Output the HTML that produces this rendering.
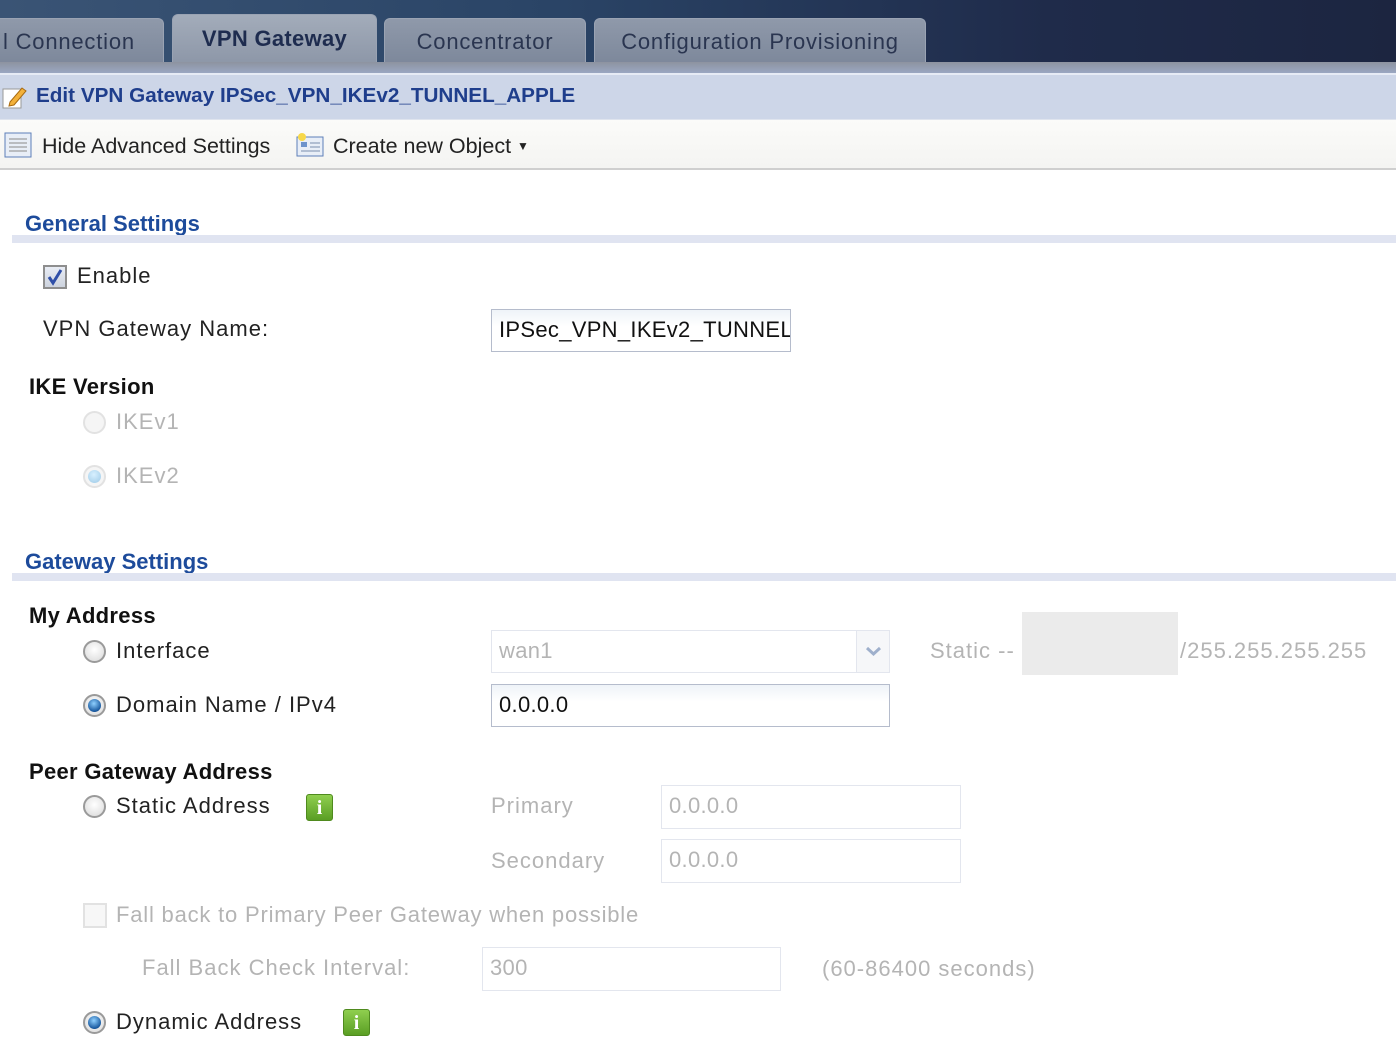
<!DOCTYPE html>
<html><head><meta charset="utf-8"><style>
*{margin:0;padding:0;box-sizing:border-box}
body{width:1396px;height:1054px;overflow:hidden;background:#fff;font-family:"Liberation Sans",sans-serif;position:relative;color:#222}
.a{position:absolute;white-space:nowrap}
.t{position:absolute;white-space:nowrap;font-size:22px;line-height:26px;height:26px;letter-spacing:1px}
.h{font-weight:bold;color:#1d4b9b;letter-spacing:0}
.b{font-weight:bold;color:#111;letter-spacing:0.3px}
.g{color:#b4b4b4}
.bar{position:absolute;left:12px;right:0;height:8px;background:#e0e4f1}
.tab{position:absolute;top:18px;height:45px;border-radius:6px 6px 0 0;background:linear-gradient(#8f99aa,#7d889b);border:1px solid #9aa3b3;border-bottom:none;color:#2a3550;font-size:22px;text-align:center;line-height:46px;letter-spacing:0.8px}
.radio{position:absolute;width:23px;height:23px;border-radius:50%;background:radial-gradient(circle at 50% 40%,#fff,#d8d8d8);border:2px solid #9a9a9a}
.radio.on::after{content:"";position:absolute;left:3px;top:3px;width:13px;height:13px;border-radius:50%;background:radial-gradient(circle at 45% 35%,#8fd0ff,#1a5aa0 70%,#0b2d5a)}
.radio.dis{border-color:#e2e2e2;background:#f5f5f5}
.radio.dis.on::after{background:radial-gradient(circle at 45% 35%,#d8f0ff,#9cc9e6)}
.inp{position:absolute;border:1px solid #b5bccc;background:linear-gradient(#eef3f8,#fff 40%);font-size:22px;line-height:40px;padding-left:7px;color:#111;letter-spacing:0.3px}
.inp.dis{border-color:#e3e6ee;background:#fff;color:#b4b4b4}
.info{position:absolute;width:27px;height:27px;border-radius:3px;background:linear-gradient(#8fcf4f,#5a9e24);border:1px solid #4f8a1e;color:#fff;font-weight:bold;font-family:"Liberation Serif",serif;font-size:20px;text-align:center;line-height:26px}
</style></head><body>
<div class="a" style="left:0;top:0;width:1396px;height:63px;background:linear-gradient(90deg,#3a5475 0%,#2a4466 40%,#1f2b4a 75%,#1c2540 100%)"></div>
<div class="tab" style="left:-10px;width:174px;text-align:left;padding-left:12px">l Connection</div>
<div class="tab" style="left:172px;top:14px;height:49px;width:205px;background:linear-gradient(#a3acba,#8d97a8);font-weight:bold;color:#1e2c4f;line-height:48px;letter-spacing:0.3px">VPN Gateway</div>
<div class="tab" style="left:384px;width:202px">Concentrator</div>
<div class="tab" style="left:594px;width:332px">Configuration Provisioning</div>
<div class="a" style="left:0;top:62px;width:1396px;height:11px;background:linear-gradient(#8d93a0,#9aa7c2)"></div>
<div class="a" style="left:0;top:73px;width:1396px;height:47px;background:#cdd6e8;border-top:2px solid #e6ebf5;border-bottom:1px solid #dfe4ee"></div>
<svg class="a" style="left:2px;top:84px" width="26" height="26" viewBox="0 0 26 26"><rect x="1" y="5" width="18" height="19" fill="#fff" stroke="#999"/><path d="M8 18 L20 4 L24 7 L12 21 L7 22Z" fill="#f3b13a" stroke="#a86a10"/></svg>
<div class="t h" style="left:36px;top:83px;color:#1f3e8c;font-size:20.7px">Edit VPN Gateway IPSec_VPN_IKEv2_TUNNEL_APPLE</div>
<div class="a" style="left:0;top:120px;width:1396px;height:50px;background:linear-gradient(#fbfbf9,#f4f4f2);border-bottom:2px solid #cfcfcf"></div>
<svg class="a" style="left:4px;top:132px" width="28" height="26" viewBox="0 0 28 26"><rect x="1" y="1" width="26" height="24" fill="#e8eef7" stroke="#5d7fb8"/><g stroke="#8a8a8a"><path d="M5 7H23M5 11H23M5 15H23M5 19H23"/></g></svg>
<div class="t" style="left:42px;top:133px;font-size:21.5px;letter-spacing:0">Hide Advanced Settings</div>
<svg class="a" style="left:295px;top:132px" width="30" height="26" viewBox="0 0 30 26"><rect x="2" y="5" width="26" height="19" fill="#e8eef7" stroke="#5d7fb8"/><rect x="6" y="10" width="6" height="5" fill="#6d93cc"/><path d="M15 11H25M15 15H25M6 19H25" stroke="#7a8fae"/><circle cx="7" cy="5" r="4" fill="#f7d84a"/></svg>
<div class="t" style="left:333px;top:133px;font-size:21.5px;letter-spacing:0">Create new Object <span style="font-size:12px;position:relative;top:-3px">▼</span></div>

<div class="t h" style="left:25px;top:211px">General Settings</div>
<div class="bar" style="top:235px"></div>
<div class="a" style="left:43px;top:265px;width:24px;height:24px;border:2px solid #8e8e8e;background:linear-gradient(#e9edf5,#cdd3de)"><svg width="20" height="20" viewBox="0 0 20 20"><path d="M4 10 L8 16 L16 3" fill="none" stroke="#2f4fa8" stroke-width="3"/></svg></div>
<div class="t" style="left:77px;top:263px">Enable</div>
<div class="t" style="left:43px;top:316px">VPN Gateway Name:</div>
<div class="inp" style="left:491px;top:309px;width:300px;height:43px;overflow:hidden">IPSec_VPN_IKEv2_TUNNEL_APPLE</div>
<div class="t b" style="left:29px;top:374px">IKE Version</div>
<div class="radio dis" style="left:83px;top:411px"></div>
<div class="t g" style="left:116px;top:409px">IKEv1</div>
<div class="radio dis on" style="left:83px;top:465px"></div>
<div class="t g" style="left:116px;top:463px">IKEv2</div>

<div class="t h" style="left:25px;top:549px">Gateway Settings</div>
<div class="bar" style="top:573px"></div>
<div class="t b" style="left:29px;top:603px">My Address</div>
<div class="radio" style="left:83px;top:640px"></div>
<div class="t" style="left:116px;top:638px">Interface</div>
<div class="inp dis" style="left:491px;top:630px;width:399px;height:43px">wan1</div>
<div class="a" style="left:856px;top:631px;width:33px;height:41px;border-left:1px solid #e3e6ee;background:#f6f7f9"><svg width="33" height="41" viewBox="0 0 33 41"><path d="M10 17 L16.5 23 L23 17" fill="none" stroke="#9fb0cc" stroke-width="3"/></svg></div>
<div class="t g" style="left:930px;top:638px">Static --</div>
<div class="a" style="left:1022px;top:612px;width:156px;height:63px;background:#ebebeb"></div>
<div class="t g" style="left:1180px;top:638px">/255.255.255.255</div>
<div class="radio on" style="left:83px;top:694px"></div>
<div class="t" style="left:116px;top:692px">Domain Name / IPv4</div>
<div class="inp" style="left:491px;top:684px;width:399px;height:43px">0.0.0.0</div>
<div class="t b" style="left:29px;top:759px">Peer Gateway Address</div>
<div class="radio" style="left:83px;top:795px"></div>
<div class="t" style="left:116px;top:793px">Static Address</div>
<div class="info" style="left:306px;top:794px">i</div>
<div class="t g" style="left:491px;top:793px">Primary</div>
<div class="inp dis" style="left:661px;top:785px;width:300px;height:44px">0.0.0.0</div>
<div class="t g" style="left:491px;top:848px">Secondary</div>
<div class="inp dis" style="left:661px;top:839px;width:300px;height:44px">0.0.0.0</div>
<div class="a" style="left:83px;top:903px;width:24px;height:25px;border:2px solid #e2e2e2;background:#f7f7f7"></div>
<div class="t g" style="left:116px;top:902px;letter-spacing:0.8px">Fall back to Primary Peer Gateway when possible</div>
<div class="t g" style="left:142px;top:955px">Fall Back Check Interval:</div>
<div class="inp dis" style="left:482px;top:947px;width:299px;height:44px">300</div>
<div class="t g" style="left:822px;top:956px">(60-86400 seconds)</div>
<div class="radio on" style="left:83px;top:1011px"></div>
<div class="t" style="left:116px;top:1009px">Dynamic Address</div>
<div class="info" style="left:343px;top:1009px">i</div>
</body></html>
